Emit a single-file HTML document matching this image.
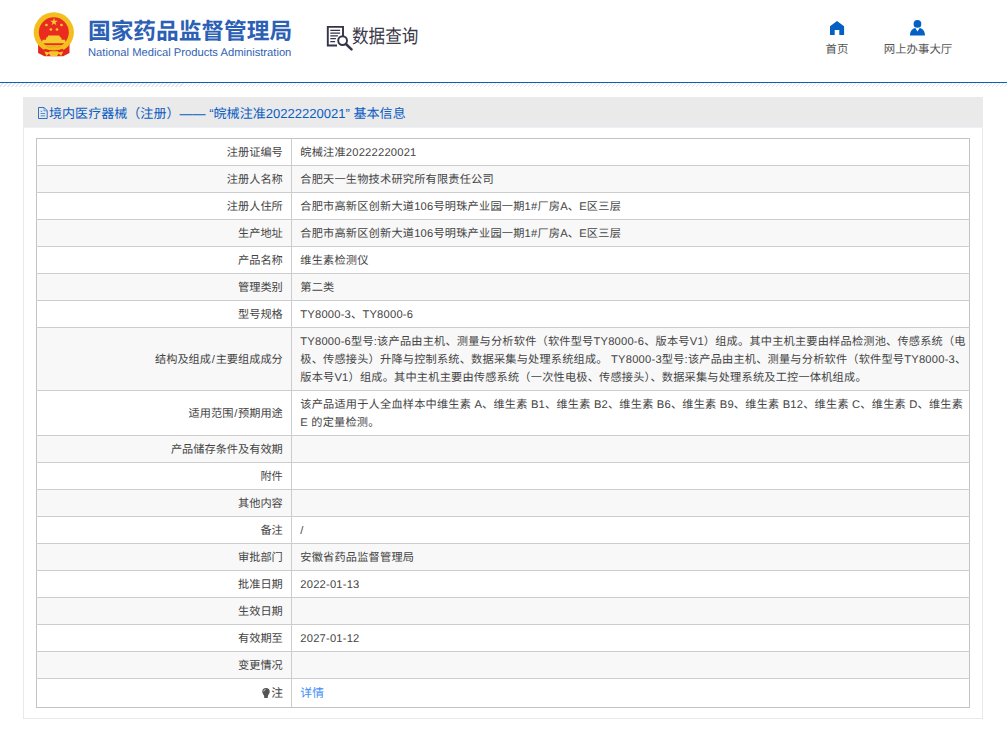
<!DOCTYPE html>
<html lang="zh-CN">
<head>
<meta charset="utf-8">
<title>境内医疗器械（注册）基本信息</title>
<style>
*{box-sizing:border-box}
html,body{margin:0;padding:0}
body{width:1007px;height:735px;position:relative;overflow:hidden;background:#fff;color:#444;
  font-family:"Liberation Sans","Noto Sans CJK SC",sans-serif;font-size:11.2px;line-height:18px;text-rendering:geometricPrecision}
.t{white-space:nowrap}
/* ---------- top header ---------- */
.hd{position:absolute;left:0;top:0;width:1007px;height:82px}
.emblem{position:absolute;left:32px;top:10px;width:44px;height:48px}
.brand{position:absolute;left:88px;top:15.700px;color:#2b60b5;font-size:22.7px;line-height:30px;white-space:nowrap;font-weight:bold}
.brand-en{position:absolute;left:88px;top:45px;color:#2f63b3;font-size:11.2px;line-height:16px;white-space:nowrap}
.query{position:absolute;left:352px;top:25.200px;color:#383848;font-size:19.1px;line-height:26px;white-space:nowrap;transform:scaleX(.868);transform-origin:0 0}
.qicon{position:absolute;left:326px;top:25px;width:28px;height:26px}
.nav{position:absolute;top:41.200px;color:#555;font-size:11.4px;line-height:18px;text-align:center;white-space:nowrap}
.nav1{left:817px;width:40px}
.nav2{left:878px;width:80px}
.ico{position:absolute;fill:#0560c4}
.rule{position:absolute;left:0;top:82px;width:1007px;height:1px;background:#0b5ec2}
.hatch{position:absolute;left:0;top:83px;width:1007px;height:4px;
  background:repeating-linear-gradient(135deg,#fff 0,#fff 2.05px,#e4e4e4 2.05px,#e4e4e4 2.83px)}
/* ---------- content panel ---------- */
.panel{position:absolute;left:23px;top:97px;width:960px;height:622px;border:1px solid #e9e9e9;border-top:0;background:#fff}
.ptitle{position:absolute;left:-1px;top:0;width:960px;height:31px;background:#eaeaea;border-bottom:1px solid #eef1f8;
  color:#0b5dc3;font-size:13.05px;line-height:30px;padding-left:27px;white-space:nowrap}
.ptitle .doc{position:absolute;left:15px;top:10px;width:10px;height:12px}
table.info{position:absolute;left:12px;top:41px;width:934px;border-collapse:collapse;table-layout:fixed;border:1px solid #c6c6c6}
table.info col.k{width:255px}
table.info th,table.info td{border:1px solid #cdcdcd;padding:5.1px 8px 2.9px;font-weight:normal;vertical-align:middle;line-height:18px;font-size:11.2px}
table.info th{text-align:right;color:#444;padding-right:8.2px}
table.info td{text-align:left;color:#444;padding-left:8.3px}
tr.e{background:#f8f8f8}
tr.o{background:#fff}
.bulb{display:inline-block;width:8px;height:10px;vertical-align:-.1px;fill:#555;margin-right:1.2px;position:relative;left:0}
tr.last .t{position:relative;top:-.4px;font-size:11.8px}
table.info tr.last th{padding-right:7.9px}
.lnk{color:#3e8df5;text-decoration:none}
td .t{letter-spacing:.2px}
.ptitle .t{position:relative;top:2.200px;left:-1px}
.sl{padding:0 .8px}
table.info th{border-left-color:#c3c3c3}
table.info td{border-right-color:#c3c3c3}
table.info tr:first-of-type th,table.info tr:first-of-type td{border-top-color:#c3c3c3}
table.info tr.last th,table.info tr.last td{border-bottom-color:#c3c3c3}
</style>
</head>
<body>
<div class="hd">
<svg class="emblem" viewBox="32 10 44 48" aria-label="国徽">
<path d="M38.100 43.400h31.400v9.700l-6.400 3.200h-18.600l-6.400-3.200z" fill="#e2271d"/>
<circle cx="53.800" cy="32.400" r="20.100" fill="#f3bf1f"/>
<circle cx="53.800" cy="32.300" r="15" fill="#ea2b20"/>
<path d="M43.500 45.100h20.600v3.200h-20.600z" fill="#f3bf1f"/>
<path d="M48.300 35.500h11l.8 1.700h1l.6 2.600h3.300l.9 3.500h-24.200l.9-3.500h3.300l.6-2.600h1z" fill="#f6cd2e"/>
<path d="M46.500 46.100c2.600 1.400 4.700 1.500 7.300.2c2.600 1.300 4.700 1.200 7.300-.2M50.300 49.300c1.200 1.300 5.800 1.300 7 0" fill="none" stroke="#dc9a1c" stroke-width=".7"/>
<path d="M44.800 48.800q9 3.600 18 0l1.800 3.200-2 2h-17.600l-2-2z" fill="#e2271d"/>
<path d="M44.300 51.600l4.400.6 1.400-1h7.400l1.400 1 4.400-.6-2.200 4.300-2.400-2.500-1.700 2.500h-6.400l-1.700-2.500-2.400 2.500z" fill="#f5c62a"/>
<path d="M54 17.900l.95 2.750h2.900l-2.350 1.750.9 2.800-2.400-1.700-2.400 1.700.9-2.800-2.350-1.750h2.900z" fill="#f6cd2e"/>
<g fill="#f6cd2e"><circle cx="46.400" cy="25" r="1.350"/><circle cx="61.500" cy="25" r="1.350"/><circle cx="50.900" cy="29.500" r="1.350"/><circle cx="57" cy="29.500" r="1.350"/></g>
</svg>
<div class="brand"><span class="t">国家药品监督管理局</span></div>
<div class="brand-en">National Medical Products Administration</div>
<svg class="qicon" viewBox="326 25 28 26" fill="none" stroke="#33334a" aria-hidden="true">
<path d="M343 36.500v-9.600h-15.200v18.600h9.200" stroke-width="1.900"/>
<path d="M330.300 30.400h9.800M330.300 33h9.800M330.300 35.800h7.600M330.300 38.700h5.600M330.300 41.600h4.800" stroke-width="1.250"/>
<circle cx="342.600" cy="40.600" r="4.400" stroke-width="1.900" fill="#fff"/>
<path d="M345.900 44l5.600 5.300" stroke-width="2.500" stroke-linecap="round"/>
</svg>
<div class="query"><span class="t">数据查询</span></div>
<svg class="ico" style="left:828px;top:19px;width:18px;height:18px" viewBox="828 19 18 18" aria-hidden="true"><path d="M830 26.200l7-5.300 7.100 5.300v8.700h-4.800v-4.800h-4.600v4.800h-4.700z"/></svg>
<div class="nav nav1"><span class="t">首页</span></div>
<svg class="ico" style="left:908px;top:18px;width:19px;height:19px" viewBox="908 18 19 19" aria-hidden="true"><circle cx="917.450" cy="23.900" r="3.850"/><path d="M910 35.600c0-4.600 2.400-7 5.300-7.500l2.150 3.400 2.250-3.400c2.900.5 5.300 2.900 5.300 7.500z"/></svg>
<div class="nav nav2"><span class="t">网上办事大厅</span></div>
</div>
<div class="rule"></div>
<div class="hatch"></div>
<div class="panel">
<div class="ptitle"><svg class="doc" viewBox="0 0 10 12" fill="none" stroke="#0b5dc3" aria-hidden="true"><path d="M.5.500h5.600l3.100 3.100v7.900h-8.700z" stroke-width=".85"/><path d="M6 .8v3h3" stroke-width=".7" opacity=".8"/><path d="M2.600 4.300h1.700M2.600 6.500h4.600" stroke-width=".8" opacity=".85"/><path d="M2.600 8.800h4.600" stroke-width="1.500" opacity=".45"/></svg><span class="t">境内医疗器械（注册）—— “皖械注准20222220021” 基本信息</span></div>

<table class="info">
<colgroup><col class="k"><col class="v"></colgroup>
<tr class="o" style="height:27px"><th><span class="t">注册证编号</span></th><td><span class="t">皖械注准20222220021</span></td></tr>
<tr class="e" style="height:27px"><th><span class="t">注册人名称</span></th><td><span class="t">合肥天一生物技术研究所有限责任公司</span></td></tr>
<tr class="o" style="height:27px"><th><span class="t">注册人住所</span></th><td><span class="t">合肥市高新区创新大道106号明珠产业园一期1#厂房A、E区三层</span></td></tr>
<tr class="e" style="height:27px"><th><span class="t">生产地址</span></th><td><span class="t">合肥市高新区创新大道106号明珠产业园一期1#厂房A、E区三层</span></td></tr>
<tr class="o" style="height:27px"><th><span class="t">产品名称</span></th><td><span class="t">维生素检测仪</span></td></tr>
<tr class="e" style="height:27px"><th><span class="t">管理类别</span></th><td><span class="t">第二类</span></td></tr>
<tr class="o" style="height:27px"><th><span class="t">型号规格</span></th><td><span class="t">TY8000-3、TY8000-6</span></td></tr>
<tr class="e" style="height:63px"><th><span class="t">结构及组成<span class="sl">/</span>主要组成成分</span></th><td><span class="t">TY8000-6型号:该产品由主机、测量与分析软件（软件型号TY8000-6、版本号V1）组成。其中主机主要由样品检测池、传感系统（电</span><br><span class="t">极、传感接头）升降与控制系统、数据采集与处理系统组成。 TY8000-3型号:该产品由主机、测量与分析软件（软件型号TY8000-3、</span><br><span class="t">版本号V1）组成。其中主机主要由传感系统（一次性电极、传感接头）、数据采集与处理系统及工控一体机组成。</span></td></tr>
<tr class="o" style="height:45px"><th><span class="t">适用范围<span class="sl">/</span>预期用途</span></th><td><span class="t">该产品适用于人全血样本中维生素 A、维生素 B1、维生素 B2、维生素 B6、维生素 B9、维生素 B12、维生素 C、维生素 D、维生素</span><br><span class="t">E 的定量检测。</span></td></tr>
<tr class="e" style="height:27px"><th><span class="t">产品储存条件及有效期</span></th><td></td></tr>
<tr class="o" style="height:27px"><th><span class="t">附件</span></th><td></td></tr>
<tr class="e" style="height:27px"><th><span class="t">其他内容</span></th><td></td></tr>
<tr class="o" style="height:27px"><th><span class="t">备注</span></th><td><span class="t">/</span></td></tr>
<tr class="e" style="height:27px"><th><span class="t">审批部门</span></th><td><span class="t">安徽省药品监督管理局</span></td></tr>
<tr class="o" style="height:27px"><th><span class="t">批准日期</span></th><td><span class="t">2022-01-13</span></td></tr>
<tr class="e" style="height:27px"><th><span class="t">生效日期</span></th><td></td></tr>
<tr class="o" style="height:27px"><th><span class="t">有效期至</span></th><td><span class="t">2027-01-12</span></td></tr>
<tr class="e" style="height:27px"><th><span class="t">变更情况</span></th><td></td></tr>
<tr class="o last" style="height:29px"><th><svg class="bulb" viewBox="0 0 8 10"><path d="M4 0a3.7 3.7 0 0 1 3.7 3.7c0 1.6-1 2.6-1.5 3.6-.3.6-.3 1-.4 1.5v.7q0 .5-.5.5h-2.6q-.5 0-.5-.5v-.7c-.1-.5-.1-.9-.4-1.5-.5-1-1.5-2-1.5-3.6a3.7 3.7 0 0 1 3.7-3.7z"/><path d="M1.7 3.4a2.4 2.4 0 0 1 1.9-2" fill="none" stroke="#fff" stroke-width=".7"/></svg><span class="t">注</span></th><td><a class="lnk"><span class="t">详情</span></a></td></tr>
</table>
</div>
</body>
</html>
